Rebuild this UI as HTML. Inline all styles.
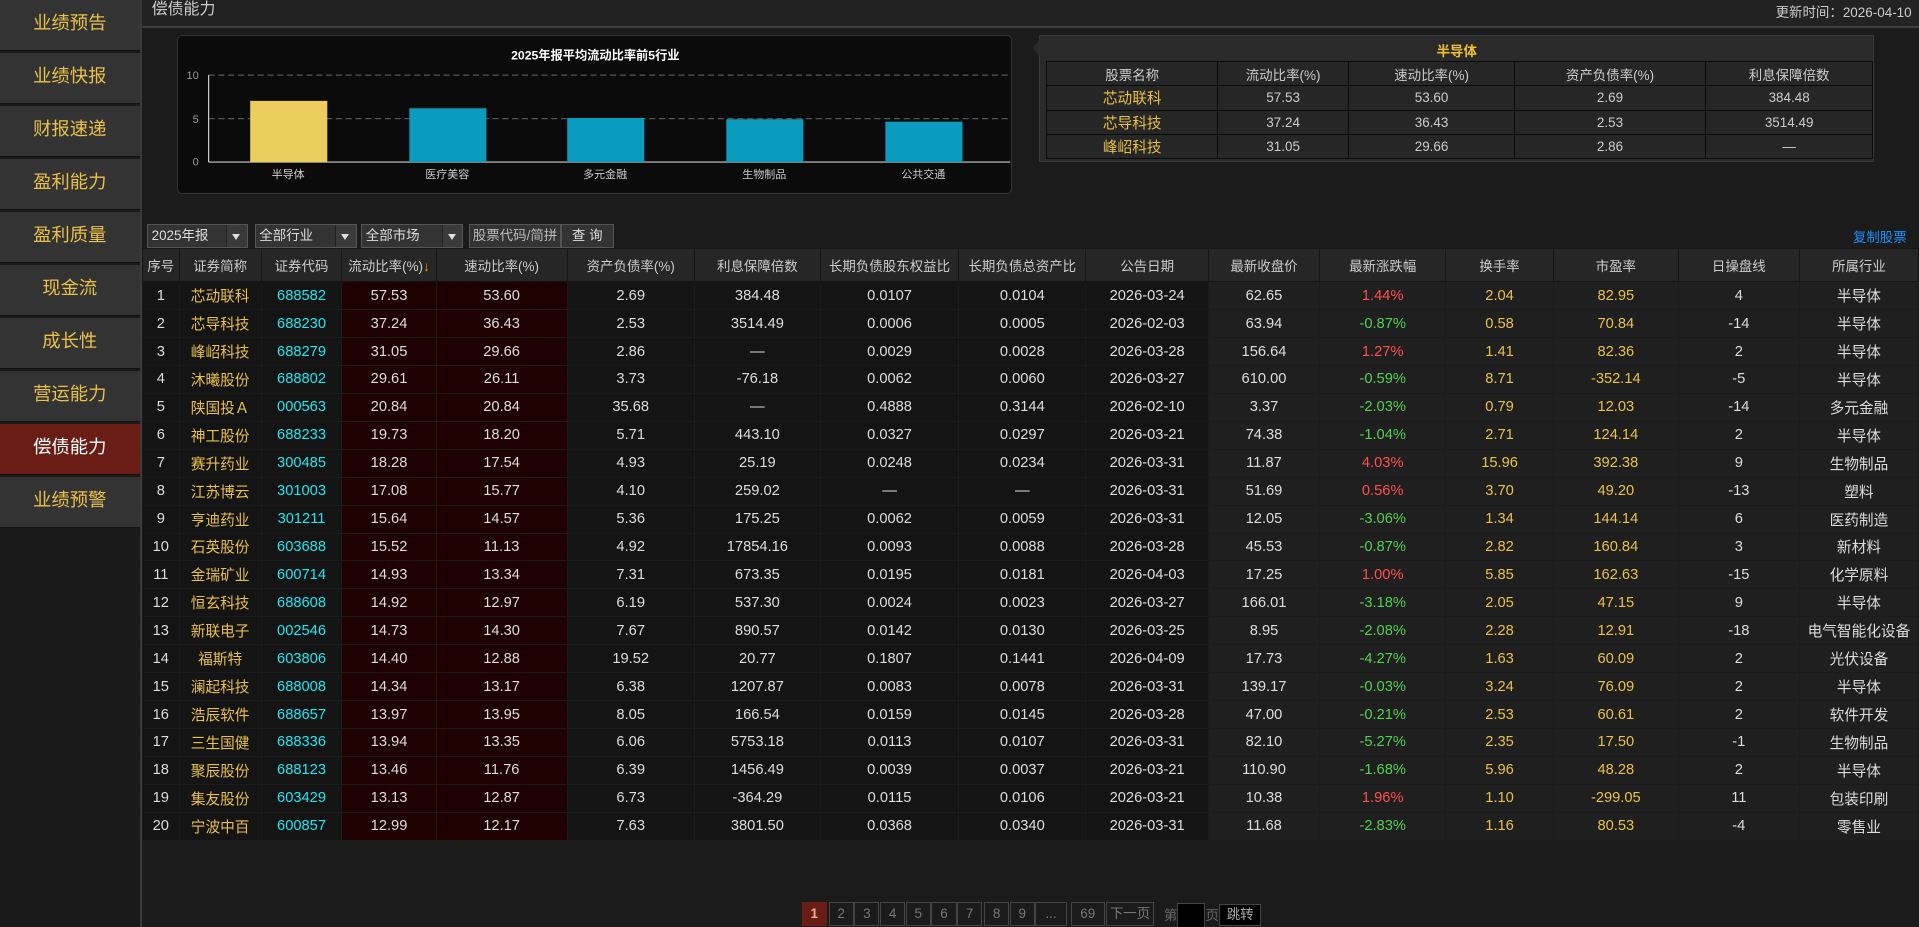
<!DOCTYPE html>
<html><head><meta charset="utf-8">
<style>
html,body{margin:0;padding:0;background:#1b1b1b;overflow:hidden;width:1919px;height:927px}
#w{zoom:1.22385;width:1568px;height:758px;position:relative;font-family:"Liberation Sans","Noto Sans CJK SC",sans-serif;color:#ccc;font-size:12px;background:#1b1b1b}
.sb{position:absolute;left:0;top:0;width:114px;height:758px;background:#1a1a1a;border-right:2px solid #3a3a3a}
.sb div{height:40.5px;margin-bottom:2px;background:#333;color:#e8c04a;font-size:15px;text-align:center;line-height:38px;border-bottom:1px solid #111}
.sb div.on{background:#6a1d14;color:#fff}
.top{position:absolute;left:116px;top:0;right:0;height:21px;background:#222;border-bottom:2px solid #3c3c3c}
.top .t{position:absolute;left:8px;top:0;font-size:13px;color:#ccc;line-height:16px}
.top .d{position:absolute;right:6px;top:1px;font-size:11px;color:#ccc}
.chart{position:absolute;left:145px;top:29px;width:680px;height:128px;background:#0b0b0b;border:1px solid #333;border-radius:4px}
.pop{position:absolute;left:849px;top:29px;width:681px;height:102px;background:#2a2a2a;border:1px solid #3a3a3a}
.pop .h{color:#f0c030;font-weight:bold;text-align:center;font-size:11px;margin-top:3px;height:17px}
.pop table{border-collapse:collapse;margin-left:5px;width:676px;font-size:11px}
.pop td{border:1.5px solid #0a0a0a;height:17px;text-align:center;color:#ccc;background:#262626}
.pop td.y{color:#e8c04a;font-size:12px}
.f{position:absolute;top:183px;height:18px;background:#333;border:1px solid #555;font-size:11px;color:#ddd;line-height:18px}
.sel .a{position:absolute;right:0;top:0;width:16px;height:18px;border-left:1px solid #222;background:#3a3a3a}
.sel .a:after{content:"";position:absolute;left:4px;top:7px;border:4px solid transparent;border-top:5px solid #ddd}
.tb{position:absolute;left:116px;top:203px;border-collapse:collapse;width:1452px;table-layout:fixed;font-size:12px}
.tb th{background:#262626;color:#ccc;font-weight:normal;height:24px;border:1px solid #151515;font-size:11px}
.tb td{height:22px;border:1px solid #1b1b1b;text-align:center;color:#ddd;background:#141414;padding:0;white-space:nowrap}
.tb td.r{background:#1f0000}
.tb td.l{background:#1f1f1f}
.tb td.y,.y{color:#e8c04a}.tb td.c{color:#1ee8f0}.tb td.up{color:#ff4e4e}.tb td.dn{color:#52d052}
.pg{position:absolute;top:737px;height:18px;border:1px solid #444;color:#777;font-size:11px;line-height:18px;text-align:center}
</style></head><body><div id="w">
<div class="sb">
<div>业绩预告</div><div>业绩快报</div><div>财报速递</div><div>盈利能力</div><div>盈利质量</div><div>现金流</div><div>成长性</div><div>营运能力</div><div class="on">偿债能力</div><div>业绩预警</div>
</div>
<div class="top"><span class="t">偿债能力</span><span class="d">更新时间：2026-04-10</span></div>

<div class="chart">
<svg width="680" height="128" style="position:absolute;left:0;top:0">
<text x="341" y="19" fill="#fff" font-size="10" font-weight="bold" text-anchor="middle" font-family="Liberation Sans,Noto Sans CJK SC,sans-serif">2025年报平均流动比率前5行业</text>
<g fill="#999" font-size="9" font-family="Liberation Sans,sans-serif" text-anchor="end"><text x="17" y="35">10</text><text x="17" y="71">5</text><text x="17" y="106">0</text></g>
<line x1="25" y1="32" x2="680" y2="32" stroke="#555" stroke-dasharray="5,3"/>
<line x1="25" y1="67.5" x2="680" y2="67.5" stroke="#555" stroke-dasharray="5,3"/>
<line x1="25" y1="32" x2="25" y2="103" stroke="#ccc"/>
<line x1="25" y1="103" x2="680" y2="103" stroke="#ccc"/>
<rect x="59" y="53" width="63" height="50" fill="#eccd5e"/>
<rect x="189" y="59" width="63" height="44" fill="#0b9bbf"/>
<rect x="318" y="67" width="63" height="36" fill="#0b9bbf"/>
<rect x="448" y="68" width="63" height="35" fill="#0b9bbf"/>
<rect x="578" y="70" width="63" height="33" fill="#0b9bbf"/>
<g fill="#ccc" font-size="9" text-anchor="middle" font-family="Liberation Sans,Noto Sans CJK SC,sans-serif"><text x="90" y="116">半导体</text><text x="220" y="116">医疗美容</text><text x="349" y="116">多元金融</text><text x="479" y="116">生物制品</text><text x="609" y="116">公共交通</text></g>
</svg></div>

<div class="pop"><div class="h">半导体</div>
<table><tr><td style="width:137px">股票名称</td><td style="width:104px">流动比率(%)</td><td style="width:133px">速动比率(%)</td><td style="width:153px">资产负债率(%)</td><td>利息保障倍数</td></tr>
<tr><td class="y">芯动联科</td><td>57.53</td><td>53.60</td><td>2.69</td><td>384.48</td></tr>
<tr><td class="y">芯导科技</td><td>37.24</td><td>36.43</td><td>2.53</td><td>3514.49</td></tr>
<tr><td class="y">峰岹科技</td><td>31.05</td><td>29.66</td><td>2.86</td><td>—</td></tr></table></div>
<svg style="position:absolute;left:842px;top:32px" width="8" height="16"><path d="M8 0 L2 7 L8 14 Z" fill="#2a2a2a"/></svg>

<div class="f sel" style="left:120px;width:81px">&nbsp;2025年报<span class="a"></span></div>
<div class="f sel" style="left:208px;width:82px">&nbsp;全部行业<span class="a"></span></div>
<div class="f sel" style="left:295px;width:82px">&nbsp;全部市场<span class="a"></span></div>
<div class="f" style="left:383px;width:74px;text-align:center;color:#bbb">股票代码/简拼</div>
<div class="f" style="left:458px;width:42px;text-align:center">查 询</div>
<div style="position:absolute;left:1514px;top:185px;color:#1e8fff;font-size:11px">复制股票</div>

<table class="tb">
<colgroup><col style="width:30px"><col style="width:67px"><col style="width:66px"><col style="width:77px"><col style="width:107px"><col style="width:104px"><col style="width:103px"><col style="width:113px"><col style="width:104px"><col style="width:100px"><col style="width:91px"><col style="width:103px"><col style="width:88px"><col style="width:102px"><col style="width:99px"><col></colgroup>
<tr><th>序号</th><th>证券简称</th><th>证券代码</th><th>流动比率(%)<span style="color:#f0a000">↓</span></th><th>速动比率(%)</th><th>资产负债率(%)</th><th>利息保障倍数</th><th>长期负债股东权益比</th><th>长期负债总资产比</th><th>公告日期</th><th>最新收盘价</th><th>最新涨跌幅</th><th>换手率</th><th>市盈率</th><th>日操盘线</th><th>所属行业</th></tr>
<tr><td>1</td><td class="y">芯动联科</td><td class="c">688582</td><td class="r">57.53</td><td class="r">53.60</td><td>2.69</td><td>384.48</td><td>0.0107</td><td>0.0104</td><td>2026-03-24</td><td class="l">62.65</td><td class="l up">1.44%</td><td class="l y">2.04</td><td class="l y">82.95</td><td class="l">4</td><td class="l">半导体</td></tr>
<tr><td>2</td><td class="y">芯导科技</td><td class="c">688230</td><td class="r">37.24</td><td class="r">36.43</td><td>2.53</td><td>3514.49</td><td>0.0006</td><td>0.0005</td><td>2026-02-03</td><td class="l">63.94</td><td class="l dn">-0.87%</td><td class="l y">0.58</td><td class="l y">70.84</td><td class="l">-14</td><td class="l">半导体</td></tr>
<tr><td>3</td><td class="y">峰岹科技</td><td class="c">688279</td><td class="r">31.05</td><td class="r">29.66</td><td>2.86</td><td>—</td><td>0.0029</td><td>0.0028</td><td>2026-03-28</td><td class="l">156.64</td><td class="l up">1.27%</td><td class="l y">1.41</td><td class="l y">82.36</td><td class="l">2</td><td class="l">半导体</td></tr>
<tr><td>4</td><td class="y">沐曦股份</td><td class="c">688802</td><td class="r">29.61</td><td class="r">26.11</td><td>3.73</td><td>-76.18</td><td>0.0062</td><td>0.0060</td><td>2026-03-27</td><td class="l">610.00</td><td class="l dn">-0.59%</td><td class="l y">8.71</td><td class="l y">-352.14</td><td class="l">-5</td><td class="l">半导体</td></tr>
<tr><td>5</td><td class="y">陕国投Ａ</td><td class="c">000563</td><td class="r">20.84</td><td class="r">20.84</td><td>35.68</td><td>—</td><td>0.4888</td><td>0.3144</td><td>2026-02-10</td><td class="l">3.37</td><td class="l dn">-2.03%</td><td class="l y">0.79</td><td class="l y">12.03</td><td class="l">-14</td><td class="l">多元金融</td></tr>
<tr><td>6</td><td class="y">神工股份</td><td class="c">688233</td><td class="r">19.73</td><td class="r">18.20</td><td>5.71</td><td>443.10</td><td>0.0327</td><td>0.0297</td><td>2026-03-21</td><td class="l">74.38</td><td class="l dn">-1.04%</td><td class="l y">2.71</td><td class="l y">124.14</td><td class="l">2</td><td class="l">半导体</td></tr>
<tr><td>7</td><td class="y">赛升药业</td><td class="c">300485</td><td class="r">18.28</td><td class="r">17.54</td><td>4.93</td><td>25.19</td><td>0.0248</td><td>0.0234</td><td>2026-03-31</td><td class="l">11.87</td><td class="l up">4.03%</td><td class="l y">15.96</td><td class="l y">392.38</td><td class="l">9</td><td class="l">生物制品</td></tr>
<tr><td>8</td><td class="y">江苏博云</td><td class="c">301003</td><td class="r">17.08</td><td class="r">15.77</td><td>4.10</td><td>259.02</td><td>—</td><td>—</td><td>2026-03-31</td><td class="l">51.69</td><td class="l up">0.56%</td><td class="l y">3.70</td><td class="l y">49.20</td><td class="l">-13</td><td class="l">塑料</td></tr>
<tr><td>9</td><td class="y">亨迪药业</td><td class="c">301211</td><td class="r">15.64</td><td class="r">14.57</td><td>5.36</td><td>175.25</td><td>0.0062</td><td>0.0059</td><td>2026-03-31</td><td class="l">12.05</td><td class="l dn">-3.06%</td><td class="l y">1.34</td><td class="l y">144.14</td><td class="l">6</td><td class="l">医药制造</td></tr>
<tr><td>10</td><td class="y">石英股份</td><td class="c">603688</td><td class="r">15.52</td><td class="r">11.13</td><td>4.92</td><td>17854.16</td><td>0.0093</td><td>0.0088</td><td>2026-03-28</td><td class="l">45.53</td><td class="l dn">-0.87%</td><td class="l y">2.82</td><td class="l y">160.84</td><td class="l">3</td><td class="l">新材料</td></tr>
<tr><td>11</td><td class="y">金瑞矿业</td><td class="c">600714</td><td class="r">14.93</td><td class="r">13.34</td><td>7.31</td><td>673.35</td><td>0.0195</td><td>0.0181</td><td>2026-04-03</td><td class="l">17.25</td><td class="l up">1.00%</td><td class="l y">5.85</td><td class="l y">162.63</td><td class="l">-15</td><td class="l">化学原料</td></tr>
<tr><td>12</td><td class="y">恒玄科技</td><td class="c">688608</td><td class="r">14.92</td><td class="r">12.97</td><td>6.19</td><td>537.30</td><td>0.0024</td><td>0.0023</td><td>2026-03-27</td><td class="l">166.01</td><td class="l dn">-3.18%</td><td class="l y">2.05</td><td class="l y">47.15</td><td class="l">9</td><td class="l">半导体</td></tr>
<tr><td>13</td><td class="y">新联电子</td><td class="c">002546</td><td class="r">14.73</td><td class="r">14.30</td><td>7.67</td><td>890.57</td><td>0.0142</td><td>0.0130</td><td>2026-03-25</td><td class="l">8.95</td><td class="l dn">-2.08%</td><td class="l y">2.28</td><td class="l y">12.91</td><td class="l">-18</td><td class="l">电气智能化设备</td></tr>
<tr><td>14</td><td class="y">福斯特</td><td class="c">603806</td><td class="r">14.40</td><td class="r">12.88</td><td>19.52</td><td>20.77</td><td>0.1807</td><td>0.1441</td><td>2026-04-09</td><td class="l">17.73</td><td class="l dn">-4.27%</td><td class="l y">1.63</td><td class="l y">60.09</td><td class="l">2</td><td class="l">光伏设备</td></tr>
<tr><td>15</td><td class="y">澜起科技</td><td class="c">688008</td><td class="r">14.34</td><td class="r">13.17</td><td>6.38</td><td>1207.87</td><td>0.0083</td><td>0.0078</td><td>2026-03-31</td><td class="l">139.17</td><td class="l dn">-0.03%</td><td class="l y">3.24</td><td class="l y">76.09</td><td class="l">2</td><td class="l">半导体</td></tr>
<tr><td>16</td><td class="y">浩辰软件</td><td class="c">688657</td><td class="r">13.97</td><td class="r">13.95</td><td>8.05</td><td>166.54</td><td>0.0159</td><td>0.0145</td><td>2026-03-28</td><td class="l">47.00</td><td class="l dn">-0.21%</td><td class="l y">2.53</td><td class="l y">60.61</td><td class="l">2</td><td class="l">软件开发</td></tr>
<tr><td>17</td><td class="y">三生国健</td><td class="c">688336</td><td class="r">13.94</td><td class="r">13.35</td><td>6.06</td><td>5753.18</td><td>0.0113</td><td>0.0107</td><td>2026-03-31</td><td class="l">82.10</td><td class="l dn">-5.27%</td><td class="l y">2.35</td><td class="l y">17.50</td><td class="l">-1</td><td class="l">生物制品</td></tr>
<tr><td>18</td><td class="y">聚辰股份</td><td class="c">688123</td><td class="r">13.46</td><td class="r">11.76</td><td>6.39</td><td>1456.49</td><td>0.0039</td><td>0.0037</td><td>2026-03-21</td><td class="l">110.90</td><td class="l dn">-1.68%</td><td class="l y">5.96</td><td class="l y">48.28</td><td class="l">2</td><td class="l">半导体</td></tr>
<tr><td>19</td><td class="y">集友股份</td><td class="c">603429</td><td class="r">13.13</td><td class="r">12.87</td><td>6.73</td><td>-364.29</td><td>0.0115</td><td>0.0106</td><td>2026-03-21</td><td class="l">10.38</td><td class="l up">1.96%</td><td class="l y">1.10</td><td class="l y">-299.05</td><td class="l">11</td><td class="l">包装印刷</td></tr>
<tr><td>20</td><td class="y">宁波中百</td><td class="c">600857</td><td class="r">12.99</td><td class="r">12.17</td><td>7.63</td><td>3801.50</td><td>0.0368</td><td>0.0340</td><td>2026-03-31</td><td class="l">11.68</td><td class="l dn">-2.83%</td><td class="l y">1.16</td><td class="l y">80.53</td><td class="l">-4</td><td class="l">零售业</td></tr>
</table>

<div class="pg" style="left:655px;width:19px;background:#6a1d14;color:#f6b090;border-color:#6a1d14;font-weight:bold">1</div>
<div class="pg" style="left:677px;width:19px">2</div>
<div class="pg" style="left:698px;width:19px">3</div>
<div class="pg" style="left:719px;width:19px">4</div>
<div class="pg" style="left:740px;width:19px">5</div>
<div class="pg" style="left:761px;width:19px">6</div>
<div class="pg" style="left:782px;width:19px">7</div>
<div class="pg" style="left:804px;width:19px">8</div>
<div class="pg" style="left:825px;width:19px">9</div>
<div class="pg" style="left:846px;width:24px">...</div>
<div class="pg" style="left:875px;width:26px">69</div>
<div class="pg" style="left:904px;width:37px">下一页</div>
<div style="position:absolute;left:951px;top:739px;color:#666;font-size:11px">第</div>
<div style="position:absolute;left:962px;top:738px;width:21px;height:20px;background:#000;border:1px solid #444"></div>
<div style="position:absolute;left:985px;top:739px;color:#666;font-size:11px">页</div>
<div class="pg" style="left:996px;width:33px;background:#000;color:#aaa;top:739px;height:16px;line-height:16px">跳转</div>
</div></body></html>
